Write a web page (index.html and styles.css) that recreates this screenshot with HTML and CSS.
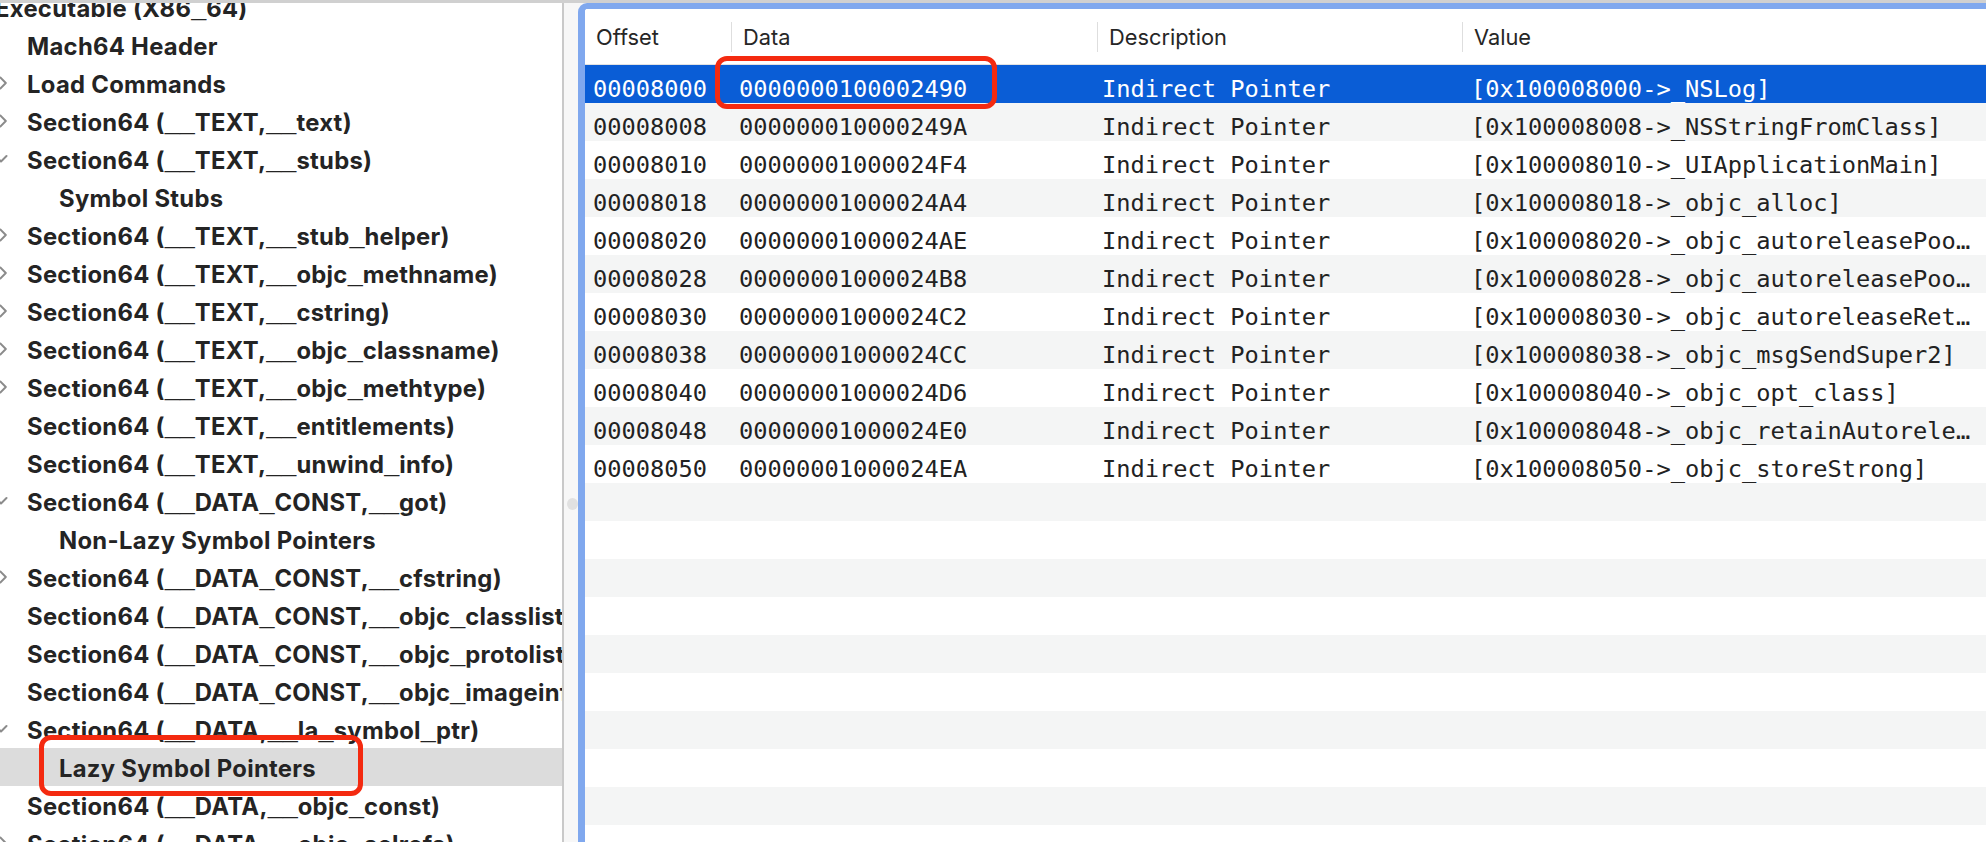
FILE: index.html
```html
<!DOCTYPE html>
<html>
<head>
<meta charset="utf-8">
<title>MachOView</title>
<link rel="stylesheet" href="styles.css">
</head>
<body>
<div class="topbar"></div>
<div class="main">
  <aside class="sidebar">
    <div class="tree">
      <div class="node l0"><div class="node-inner"><span class="disc"></span><span class="label">Executable (X86<span class="u">_</span>64)</span></div></div>
      <div class="node l1"><div class="node-inner"><span class="disc"></span><span class="label">Mach64 Header</span></div></div>
      <div class="node l1"><div class="node-inner"><svg class="disc" viewBox="0 0 16 14"><path d="M8.3 1.5 L13.8 7 L8.3 12.5"/></svg><span class="label">Load Commands</span></div></div>
      <div class="node l1"><div class="node-inner"><svg class="disc" viewBox="0 0 16 14"><path d="M8.3 1.5 L13.8 7 L8.3 12.5"/></svg><span class="label">Section64 (<span class="u">__</span>TEXT,<span class="u">__</span>text)</span></div></div>
      <div class="node l1"><div class="node-inner"><svg class="disc" viewBox="0 0 16 14"><path d="M3.5 4 L9 9.5 L14.5 4"/></svg><span class="label">Section64 (<span class="u">__</span>TEXT,<span class="u">__</span>stubs)</span></div></div>
      <div class="node l2"><div class="node-inner"><span class="disc"></span><span class="label">Symbol Stubs</span></div></div>
      <div class="node l1"><div class="node-inner"><svg class="disc" viewBox="0 0 16 14"><path d="M8.3 1.5 L13.8 7 L8.3 12.5"/></svg><span class="label">Section64 (<span class="u">__</span>TEXT,<span class="u">__</span>stub<span class="u">_</span>helper)</span></div></div>
      <div class="node l1"><div class="node-inner"><svg class="disc" viewBox="0 0 16 14"><path d="M8.3 1.5 L13.8 7 L8.3 12.5"/></svg><span class="label">Section64 (<span class="u">__</span>TEXT,<span class="u">__</span>objc<span class="u">_</span>methname)</span></div></div>
      <div class="node l1"><div class="node-inner"><svg class="disc" viewBox="0 0 16 14"><path d="M8.3 1.5 L13.8 7 L8.3 12.5"/></svg><span class="label">Section64 (<span class="u">__</span>TEXT,<span class="u">__</span>cstring)</span></div></div>
      <div class="node l1"><div class="node-inner"><svg class="disc" viewBox="0 0 16 14"><path d="M8.3 1.5 L13.8 7 L8.3 12.5"/></svg><span class="label">Section64 (<span class="u">__</span>TEXT,<span class="u">__</span>objc<span class="u">_</span>classname)</span></div></div>
      <div class="node l1"><div class="node-inner"><svg class="disc" viewBox="0 0 16 14"><path d="M8.3 1.5 L13.8 7 L8.3 12.5"/></svg><span class="label">Section64 (<span class="u">__</span>TEXT,<span class="u">__</span>objc<span class="u">_</span>methtype)</span></div></div>
      <div class="node l1"><div class="node-inner"><span class="disc"></span><span class="label">Section64 (<span class="u">__</span>TEXT,<span class="u">__</span>entitlements)</span></div></div>
      <div class="node l1"><div class="node-inner"><span class="disc"></span><span class="label">Section64 (<span class="u">__</span>TEXT,<span class="u">__</span>unwind<span class="u">_</span>info)</span></div></div>
      <div class="node l1"><div class="node-inner"><svg class="disc" viewBox="0 0 16 14"><path d="M3.5 4 L9 9.5 L14.5 4"/></svg><span class="label">Section64 (<span class="u">__</span>DATA<span class="u">_</span>CONST,<span class="u">__</span>got)</span></div></div>
      <div class="node l2"><div class="node-inner"><span class="disc"></span><span class="label">Non-Lazy Symbol Pointers</span></div></div>
      <div class="node l1"><div class="node-inner"><svg class="disc" viewBox="0 0 16 14"><path d="M8.3 1.5 L13.8 7 L8.3 12.5"/></svg><span class="label">Section64 (<span class="u">__</span>DATA<span class="u">_</span>CONST,<span class="u">__</span>cfstring)</span></div></div>
      <div class="node l1"><div class="node-inner"><span class="disc"></span><span class="label">Section64 (<span class="u">__</span>DATA<span class="u">_</span>CONST,<span class="u">__</span>objc<span class="u">_</span>classlist)</span></div></div>
      <div class="node l1"><div class="node-inner"><span class="disc"></span><span class="label">Section64 (<span class="u">__</span>DATA<span class="u">_</span>CONST,<span class="u">__</span>objc<span class="u">_</span>protolist)</span></div></div>
      <div class="node l1"><div class="node-inner"><span class="disc"></span><span class="label">Section64 (<span class="u">__</span>DATA<span class="u">_</span>CONST,<span class="u">__</span>objc<span class="u">_</span>imageinfo)</span></div></div>
      <div class="node l1"><div class="node-inner"><svg class="disc" viewBox="0 0 16 14"><path d="M3.5 4 L9 9.5 L14.5 4"/></svg><span class="label">Section64 (<span class="u">__</span>DATA,<span class="u">__</span>la<span class="u">_</span>symbol<span class="u">_</span>ptr)</span></div></div>
      <div class="node l2 selected"><div class="node-inner"><span class="disc"></span><span class="label">Lazy Symbol Pointers</span></div></div>
      <div class="node l1"><div class="node-inner"><span class="disc"></span><span class="label">Section64 (<span class="u">__</span>DATA,<span class="u">__</span>objc<span class="u">_</span>const)</span></div></div>
      <div class="node l1"><div class="node-inner"><svg class="disc" viewBox="0 0 16 14"><path d="M8.3 1.5 L13.8 7 L8.3 12.5"/></svg><span class="label">Section64 (<span class="u">__</span>DATA,<span class="u">__</span>objc<span class="u">_</span>selrefs)</span></div></div>
      <div class="node l1"><div class="node-inner"><svg class="disc" viewBox="0 0 16 14"><path d="M8.3 1.5 L13.8 7 L8.3 12.5"/></svg><span class="label">Section64 (<span class="u">__</span>DATA,<span class="u">__</span>objc<span class="u">_</span>classrefs)</span></div></div>
    </div>
  </aside>
  <div class="splitter"><span class="grip"></span></div>
  <section class="tablepane">
    <div class="thead">
      <div class="th">Offset</div>
      <div class="th">Data</div>
      <div class="th">Description</div>
      <div class="th">Value</div>
    </div>
    <div class="tbody">
      <div class="tr sel"><div class="td">00008000</div><div class="td">0000000100002490</div><div class="td td-desc">Indirect Pointer</div><div class="td td-val">[0x100008000-&gt;_NSLog]</div></div>
      <div class="tr"><div class="td">00008008</div><div class="td">000000010000249A</div><div class="td td-desc">Indirect Pointer</div><div class="td td-val">[0x100008008-&gt;_NSStringFromClass]</div></div>
      <div class="tr"><div class="td">00008010</div><div class="td">00000001000024F4</div><div class="td td-desc">Indirect Pointer</div><div class="td td-val">[0x100008010-&gt;_UIApplicationMain]</div></div>
      <div class="tr"><div class="td">00008018</div><div class="td">00000001000024A4</div><div class="td td-desc">Indirect Pointer</div><div class="td td-val">[0x100008018-&gt;_objc_alloc]</div></div>
      <div class="tr"><div class="td">00008020</div><div class="td">00000001000024AE</div><div class="td td-desc">Indirect Pointer</div><div class="td td-val">[0x100008020-&gt;_objc_autoreleasePoolPop]</div></div>
      <div class="tr"><div class="td">00008028</div><div class="td">00000001000024B8</div><div class="td td-desc">Indirect Pointer</div><div class="td td-val">[0x100008028-&gt;_objc_autoreleasePoolPush]</div></div>
      <div class="tr"><div class="td">00008030</div><div class="td">00000001000024C2</div><div class="td td-desc">Indirect Pointer</div><div class="td td-val">[0x100008030-&gt;_objc_autoreleaseReturnValue]</div></div>
      <div class="tr"><div class="td">00008038</div><div class="td">00000001000024CC</div><div class="td td-desc">Indirect Pointer</div><div class="td td-val">[0x100008038-&gt;_objc_msgSendSuper2]</div></div>
      <div class="tr"><div class="td">00008040</div><div class="td">00000001000024D6</div><div class="td td-desc">Indirect Pointer</div><div class="td td-val">[0x100008040-&gt;_objc_opt_class]</div></div>
      <div class="tr"><div class="td">00008048</div><div class="td">00000001000024E0</div><div class="td td-desc">Indirect Pointer</div><div class="td td-val">[0x100008048-&gt;_objc_retainAutoreleasedReturnValue]</div></div>
      <div class="tr"><div class="td">00008050</div><div class="td">00000001000024EA</div><div class="td td-desc">Indirect Pointer</div><div class="td td-val">[0x100008050-&gt;_objc_storeStrong]</div></div>
      <div class="tr empty"></div>
      <div class="tr empty"></div>
      <div class="tr empty"></div>
      <div class="tr empty"></div>
      <div class="tr empty"></div>
      <div class="tr empty"></div>
      <div class="tr empty"></div>
      <div class="tr empty"></div>
      <div class="tr empty"></div>
      <div class="tr empty"></div>
    </div>
  </section>
</div>
<div class="annot annot-data"></div>
<div class="annot annot-lazy"></div>
</body>
</html>
```

FILE: styles.css
```css
* { box-sizing: border-box; }

html, body {
  margin: 0;
  padding: 0;
  overflow: hidden;
}

body {
  width: 1986px;
  height: 842px;
  background: #f7f7f7;
  font-family: Inter, "Noto Sans", sans-serif;
  display: flex;
  flex-direction: column;
}

.topbar {
  height: 3px;
  flex: none;
  background: #d0d0d0;
}

.main {
  flex: 1;
  display: flex;
  min-height: 0;
}

/* ---------- outline (left) ---------- */
.sidebar {
  width: 564px;
  flex: none;
  background: #ffffff;
  border-right: 2px solid #c9c9c9;
  overflow: hidden;
}

.tree {
  margin-top: -15px;
}

.node {
  height: 38px;
}

.node.selected {
  background: #dcdcdc;
}

.node-inner {
  height: 100%;
  display: flex;
  align-items: center;
  gap: 19px;
}

.l0 .node-inner { margin-left: -40px; }
.l1 .node-inner { margin-left: -8px; }
.l2 .node-inner { margin-left: 24px; }

.disc {
  width: 16px;
  height: 14px;
  flex: none;
}

.disc path {
  fill: none;
  stroke: #8b8b8b;
  stroke-width: 2;
  stroke-linecap: round;
  stroke-linejoin: round;
}

.label {
  font-size: 23.8px;
  line-height: 38px;
  margin-top: 3px;
  font-weight: 700;
  letter-spacing: 0.3px;
  color: #242424;
  white-space: nowrap;
}

.label .u {
  font-family: "Liberation Sans", Arial, sans-serif;
  font-size: 27px;
  line-height: 0;
  letter-spacing: 0;
}

/* ---------- splitter ---------- */
.splitter {
  width: 14px;
  flex: none;
  background: #f7f7f7;
  display: flex;
  justify-content: flex-start;
  align-items: flex-start;
  padding-top: 495px;
  padding-left: 3px;
}

.grip {
  width: 12px;
  height: 12px;
  border-radius: 50%;
  background: #e1e1e1;
}

/* ---------- table (right) ---------- */
.tablepane {
  flex: 1;
  min-width: 0;
  background: #ffffff;
  border-left: 7px solid #80a8ee;
  border-top: 6px solid #80a8ee;
  border-top-left-radius: 9px;
  overflow: hidden;
}

.thead,
.tr {
  display: grid;
  grid-template-columns: 146px 366px 365px 1fr;
}

.thead {
  height: 56px;
  padding: 13px 0 12px;
  border-bottom: 1px solid #e2e2e2;
  background: #ffffff;
}

.th {
  font-size: 21.8px;
  line-height: 30px;
  padding-left: 11px;
  color: #262626;
  white-space: nowrap;
}

.th + .th {
  border-left: 1px solid #dedede;
}

.tr {
  height: 38px;
  align-items: center;
  background: #ffffff;
}

.tr:nth-child(even) {
  background: #f4f5f5;
}

.tr.sel {
  background: #0a5dd6;
}

.td {
  font-family: "DejaVu Sans Mono", "Liberation Mono", monospace;
  font-size: 23.7px;
  padding-top: 9px;
  padding-left: 8px;
  color: #222222;
  white-space: nowrap;
  overflow: hidden;
  text-overflow: ellipsis;
}

.td-desc { padding-left: 5px; }
.td-val { padding-left: 9px; padding-right: 6px; }

.tr.sel .td {
  color: #ffffff;
}

/* ---------- annotation boxes ---------- */
.annot {
  position: absolute;
  border: 5px solid #f42a10;
  border-radius: 12px;
}

.annot-data {
  left: 715px;
  top: 56px;
  width: 282px;
  height: 53px;
}

.annot-lazy {
  left: 39px;
  top: 735px;
  width: 324px;
  height: 61px;
}
```
